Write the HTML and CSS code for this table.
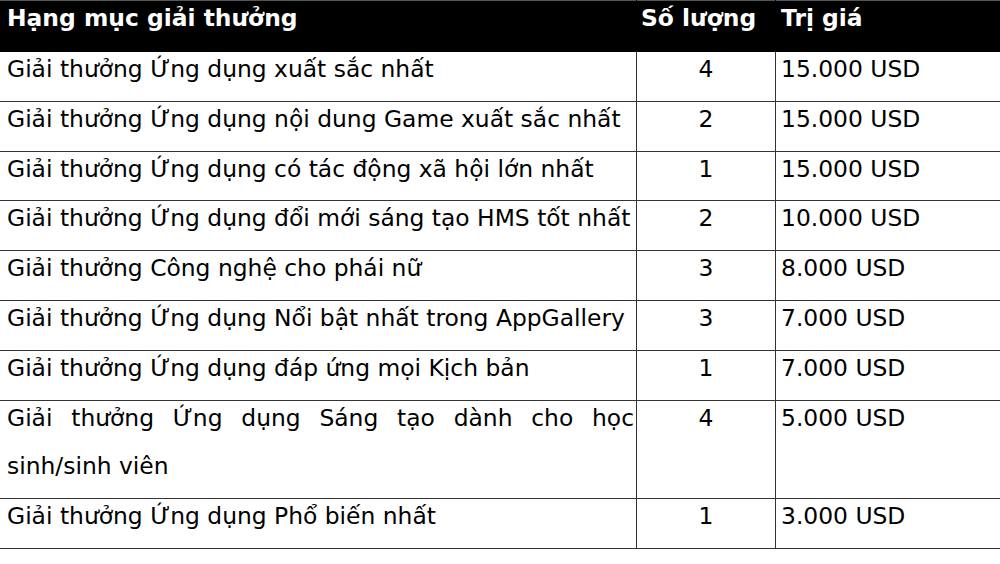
FILE: index.html
```html
<!DOCTYPE html>
<html lang="vi">
<head>
<meta charset="utf-8">
<link rel="stylesheet" href="styles.css">
</head>
<body>
<table class="prizes">
  <colgroup>
    <col class="c-name">
    <col class="c-qty">
    <col class="c-val">
  </colgroup>
  <thead>
    <tr>
      <th class="name"><div class="t">Hạng mục giải thưởng</div></th>
      <th class="qty"><div class="t">Số lượng</div></th>
      <th class="val"><div class="t">Trị giá</div></th>
    </tr>
  </thead>
  <tbody>
    <tr><td class="name"><div class="t">Giải thưởng Ứng dụng xuất sắc nhất</div></td><td class="qty"><div class="t">4</div></td><td class="val"><div class="t">15.000 USD</div></td></tr>
    <tr><td class="name"><div class="t">Giải thưởng Ứng dụng nội dung Game xuất sắc nhất</div></td><td class="qty"><div class="t">2</div></td><td class="val"><div class="t">15.000 USD</div></td></tr>
    <tr><td class="name"><div class="t">Giải thưởng Ứng dụng có tác động xã hội lớn nhất</div></td><td class="qty"><div class="t">1</div></td><td class="val"><div class="t">15.000 USD</div></td></tr>
    <tr><td class="name"><div class="t">Giải thưởng Ứng dụng đổi mới sáng tạo HMS tốt nhất</div></td><td class="qty"><div class="t">2</div></td><td class="val"><div class="t">10.000 USD</div></td></tr>
    <tr><td class="name"><div class="t">Giải thưởng Công nghệ cho phái nữ</div></td><td class="qty"><div class="t">3</div></td><td class="val"><div class="t">8.000 USD</div></td></tr>
    <tr><td class="name"><div class="t">Giải thưởng Ứng dụng Nổi bật nhất trong AppGallery</div></td><td class="qty"><div class="t">3</div></td><td class="val"><div class="t">7.000 USD</div></td></tr>
    <tr><td class="name"><div class="t">Giải thưởng Ứng dụng đáp ứng mọi Kịch bản</div></td><td class="qty"><div class="t">1</div></td><td class="val"><div class="t">7.000 USD</div></td></tr>
    <tr><td class="name"><div class="t">Giải thưởng Ứng dụng Sáng tạo dành cho học sinh/sinh viên</div></td><td class="qty"><div class="t">4</div></td><td class="val"><div class="t">5.000 USD</div></td></tr>
    <tr><td class="name"><div class="t">Giải thưởng Ứng dụng Phổ biến nhất</div></td><td class="qty"><div class="t">1</div></td><td class="val"><div class="t">3.000 USD</div></td></tr>
  </tbody>
</table>
</body>
</html>
```

FILE: styles.css
```css
html, body {
  margin: 0;
  padding: 0;
  background: #ffffff;
}

.prizes {
  border-collapse: collapse;
  table-layout: fixed;
  width: 1002px;
  margin-left: -2px;
  font-family: "DejaVu Sans", sans-serif;
  font-size: 23.4px;
  color: #000000;
}

.c-name { width: 638px; }
.c-qty { width: 139px; }
.c-val { width: 225px; }

.prizes th,
.prizes td {
  border: 1px solid #333333;
  padding: 0;
  vertical-align: top;
  line-height: 48.8px;
}

.prizes th {
  background: #000000;
  color: #ffffff;
  font-weight: bold;
  border-color: #000000;
  border-top-color: #555555;
  text-align: left;
  height: 50px;
}

.prizes th .t {
  margin: -7px 0 7px;
}

.prizes td .t {
  margin: -7px 0 7px;
}

.prizes .name {
  padding-left: 8px;
  padding-right: 2px;
  text-align: justify;
}

.prizes th.qty {
  padding-left: 4px;
}

.prizes td.qty {
  text-align: center;
}

.prizes .val {
  padding-left: 5px;
}
```
